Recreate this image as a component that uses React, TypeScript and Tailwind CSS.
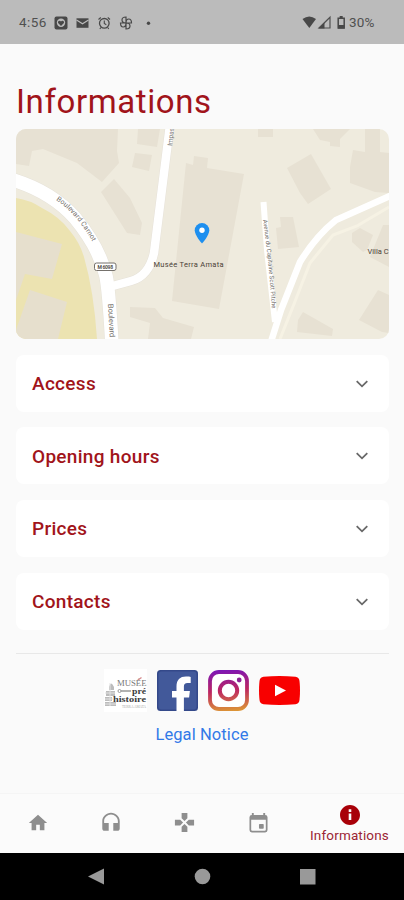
import React from "react";

const buildings = [
  "16,129 118,129 117,151 119,163 102,182 77,163 43,149 32,151 29,166 16,164",
  "114,179 101,192 127,233 140,235 142,223 130,198",
  "138,129 160,129 157,147 137,144",
  "135,153 152,155 149,171 132,167",
  "186,163 193,165 194,156 208,158 207,168 244,174 219,309 172,301",
  "130,307 155,308 163,318 194,327 191,339 148,339 150,323 130,317",
  "258,129 273,129 273,137 258,137",
  "313,129 350,129 340,139 340,147 330,146 330,142 320,140",
  "287,168 311,154 331,189 308,204 300,193",
  "365,129 380,129 380,152 389,153 389,193 375,192 350,183 350,167 353,150 365,152",
  "280,217 293,217 299,247 278,249 276,228 281,227",
  "352,233 360,228 373,235 367,250 363,252 352,242",
  "383,225 389,225 389,267 370,257",
  "378,290 389,295 389,333 382,332 359,320",
  "303,312 333,329 332,336 297,332 298,320",
];

function MapCard() {
  return (
    <svg viewBox="16 129 373 210" className="block h-[210px] w-[373px] rounded-[10px] font-['Roboto',sans-serif]">
      <rect x="16" y="129" width="373" height="210" fill="#efebde" />
      <g fill="#e7e1d3">
        {buildings.map((p) => (
          <polygon key={p} points={p} />
        ))}
      </g>
      <path d="M16 198Q30 200 42 208Q60 217 70 231Q80 243 84 257Q94 292 97 339H16Z" fill="#ece3b1" />
      <path d="M16 232L62 244L52 279L25 274L16 300ZM30 290L67 302L58 339H16V330Z" fill="#e6dfcd" />
      <path d="M280 339L294 304L310 263L333 235L357 226L389 207" fill="none" stroke="#f6f2e4" strokeWidth="3" />
      <g fill="none" stroke="#e6e2d9">
        <path d="M10 179Q51 191 75 218Q99 247 106 276Q109 290 112 345" strokeWidth="14.500" />
        <path d="M109 287L131 281Q149 276 154 253L170 125" strokeWidth="9.500" />
      </g>
      <g fill="none" stroke="#fff">
        <path d="M10 179Q51 191 75 218Q99 247 106 276Q109 290 112 345" strokeWidth="13.5" />
        <path d="M109 287L131 281Q149 276 154 253L170 125" strokeWidth="8.5" />
        <path d="M270 345L281 310L300 262Q316 236 336 220L392 195" strokeWidth="6.5" />
        <path d="M263.500 202L267 250L275 322" strokeWidth="6" />
      </g>
      <path id="carnot" d="M56 200Q79 215 97 250" fill="none" />
      <g fill="#74706b" fontSize="7">
        <text textLength="56">
          <textPath href="#carnot">Boulevard Carnot</textPath>
        </text>
        <text transform="translate(108 304) rotate(87)" fontSize="7.500">Boulevard</text>
        <text transform="translate(172 146) rotate(-84)" fontSize="6.500">Impasse</text>
        <path id="avenue" d="M263 220Q269 260 272 310" fill="none" />
        <text fontSize="6" textLength="89">
          <textPath href="#avenue">Avenue du Capitaine Scott Pitche</textPath>
        </text>
      </g>
      <rect x="94.500" y="263" width="21.500" height="7.500" rx="2" fill="#fff" stroke="#75716c" strokeWidth="1" />
      <text x="97.500" y="268.800" fontSize="5" fontWeight="700" fill="#55514c" textLength="15.500">M 6098</text>
      <path d="M202 223a7.300 7.300 0 0 0-7.300 7.300c0 5.400 7.300 13.200 7.300 13.200s7.300-7.800 7.300-13.200a7.300 7.300 0 0 0-7.300-7.300Z" fill="#1e8fef" />
      <circle cx="202" cy="230.200" r="2.700" fill="#fff" />
      <text x="153.500" y="266.700" fontSize="7.500" fill="#4b3f37" textLength="70">Musée Terra Amata</text>
      <text x="367.500" y="254" fontSize="7.500" fill="#4b3f37">Villa C</text>
    </svg>
  );
}

function StatusBar() {
  return (
    <div className="flex h-11 shrink-0 items-center bg-[#bbb] pt-px pl-[19px] text-[13.500px] text-[#505050]">
      <span className="w-[28px] tracking-[0.4px]">4:56</span>
      <svg viewBox="54 16 98 14" className="ml-[7px] h-[14px] w-[98px]" fill="none" stroke="#484848">
        <rect x="54.500" y="16.500" width="13" height="13" rx="2" fill="#484848" stroke="none" />
        <circle cx="61" cy="22.700" r="4.200" fill="#bbb" stroke="none" />
        <path d="M61 26l-2.700-2.800c-1.300-1.700 1.300-3.700 2.700-1.700 1.400-2 4 0 2.700 1.700Z" fill="#484848" stroke="none" />
        <path d="M76.500 18.300h12v9.500h-12z" fill="#484848" stroke="none" />
        <path d="M76.500 20l6 3.800 6-3.800" stroke="#bbb" strokeWidth="1.200" />
        <circle cx="104.300" cy="23.300" r="4.800" strokeWidth="1.300" />
        <path d="M104.300 20.500v3l2 1.200M98.500 19.500l2.300-2M110 19.500l-2.300-2M101 27.500l-1.200 1.500M107.600 27.500l1.200 1.500" strokeWidth="1.100" />
        <path d="M126 23V17q-4 0-4 3t4 3M126 23h5.500q0-4-2.700-4T126 23M126 23v6q4 0 4-3T126 23M126 23h-5.500q0 4 2.700 4T126 23" strokeWidth="1.200" />
        <circle cx="148.500" cy="23.300" r="1.700" fill="#484848" stroke="none" />
      </svg>
      <svg viewBox="302 15 45 15" className="ml-[150px] h-[15px] w-[45px]" fill="#484848">
        <path d="M302.500 19Q309.300 13.800 316 19L309.300 28Z" />
        <path d="M319 28L330 17.200V28Z" fill="none" stroke="#505050" strokeWidth="1.200" />
        <path d="M318.500 28.500L324.500 22.500V28.500Z" />
        <path d="M338.200 18.200h6v9.700h-6z" fill="none" stroke="#484848" strokeWidth="1.500" />
        <path d="M339.700 16h3v2h-3zM338 25h6.500v3.500H338z" />
      </svg>
      <span className="ml-[2px] tracking-[0.200px]">30%</span>
    </div>
  );
}

function AccordionRow({ label }: { label: string }) {
  return (
    <button className="flex h-[57px] w-[373px] items-center justify-between rounded-lg bg-white pt-px pr-[20px] pl-4 text-[19px] font-medium text-[#a1141a]">
      <span className="pt-px tracking-[0.300px]">{label}</span>
      <svg viewBox="0 0 14 8" className="h-2 w-[14px]" fill="none" stroke="#686868" strokeWidth="1.800">
        <path d="M1.700 1.200L7 6.300L12.300 1.200" />
      </svg>
    </button>
  );
}

function MuseumLogo() {
  return (
    <svg viewBox="0 0 43 43" className="h-[43px] w-[43px] font-['Liberation_Serif',serif]">
      <rect width="43" height="43" fill="#fff" />
      <g fill="#bcbcbc">
        <path d="M5 18Q7 11 10 18V21H5ZM2 22h9v5H2ZM1 28h7v4H1ZM1 33h11v4H1Z" />
      </g>
      <path d="M1 24h10M1 30h8M1 35h11M6 14v23" stroke="#e3e3e3" strokeWidth="1" />
      <text x="13" y="17" fontSize="8" fill="#777" textLength="29.500" lengthAdjust="spacingAndGlyphs">MUSÉE</text>
      <path d="M34 11l3.500-2.500" stroke="#d4878a" strokeWidth="1.200" />
      <path d="M17 22h10" stroke="#888" strokeWidth="1.300" />
      <circle cx="15.500" cy="22" r="1.500" fill="none" stroke="#999" />
      <text x="28" y="24.500" fontSize="8" fontWeight="700" fill="#3b3b3b" textLength="14" lengthAdjust="spacingAndGlyphs">pré</text>
      <text x="9" y="33" fontSize="8" fontWeight="700" fill="#3b3b3b" textLength="33" lengthAdjust="spacingAndGlyphs">histoire</text>
      <text x="18" y="38.500" fontSize="3.500" fill="#aaa" textLength="24">TERRA AMATA</text>
    </svg>
  );
}

function Socials() {
  return (
    <div className="flex h-[43px] items-center pl-[88px]">
      <MuseumLogo />
      <svg viewBox="0 0 41 41" className="ml-[9.500px] h-[41px] w-[41px]">
        <rect width="41" height="41" rx="3.500" fill="#34498a" />
        <rect x="1.500" y="1.500" width="38" height="38" rx="3" fill="#42599a" />
        <path d="M19.500 41V27.500h-4.500V21h4.500V16.500c0-6.700 3.500-10 9.500-10 2.300 0 4 .2 4.700.4v6h-3.200c-2.600 0-3.600 1.300-3.600 3.600V21h6l-.8 6.500h-5.200V41Z" fill="#fff" />
      </svg>
      <svg viewBox="0 0 41 41" className="ml-[10px] h-[41px] w-[41px]" fill="none" stroke="url(#insta)">
        <defs>
          <linearGradient id="insta" gradientUnits="userSpaceOnUse" x1="18" y1="0" x2="22" y2="41">
            <stop offset="0" stopColor="#7d16b4" />
            <stop offset=".5" stopColor="#bd2661" />
            <stop offset="1" stopColor="#dc9436" />
          </linearGradient>
        </defs>
        <rect x="2" y="2" width="37" height="37" rx="9" fill="#fff" strokeWidth="3.800" />
        <circle cx="20.500" cy="20.500" r="8.700" strokeWidth="4" />
        <circle cx="31.200" cy="10" r="2.400" fill="#8b2196" stroke="none" />
      </svg>
      <svg viewBox="0 0 41 29" className="ml-[10px] h-[29px] w-[41px]">
        <path d="M4.500.8Q20.500-.6 36.500.8Q40 1.200 40.500 5Q41.500 14.500 40.500 24Q40 27.800 36.500 28.200Q20.500 29.600 4.500 28.200Q1 27.800.5 24Q-.5 14.500.5 5Q1 1.200 4.500.8Z" fill="#f80000" />
        <path d="M16 8.800V20.200L27 14.500Z" fill="#fff" />
      </svg>
    </div>
  );
}

function TabBar() {
  return (
    <nav className="flex h-[60px] shrink-0 items-center border-t border-[#f5f5f5] bg-[#fbfbfb] pb-[2px] pl-px text-[#8e8e8e]">
      <div className="flex w-[73px] justify-center">
        <svg viewBox="0 0 24 24" className="h-[22px] w-[22px]" fill="currentColor"><path d="M10 20v-6h4v6h5v-8h3L12 3 2 12h3v8z" /></svg>
      </div>
      <div className="flex w-[74px] justify-center">
        <svg viewBox="0 0 24 24" className="mb-[2px] h-[22px] w-[22px]" fill="currentColor"><path d="M12 2c-5 0-9.500 4-9.500 9v8c0 1.500 1 2.500 2.500 2.500h4.500V13H4.500v-2c0-3.900 3.600-7.200 7.500-7.200s7.500 3.300 7.500 7.200v2h-5v8.500H19c1.500 0 2.500-1 2.500-2.500v-8c0-5-4.500-9-9.500-9z" /></svg>
      </div>
      <div className="flex w-[73px] justify-center">
        <svg viewBox="0 0 24 24" className="h-[23px] w-[23px]" fill="currentColor"><path d="M15 7.500V2H9v5.500l3 3zM7.500 9H2v6h5.500l3-3zM9 16.500V22h6v-5.500l-3-3zM16.500 9l-3 3 3 3H22V9z" /></svg>
      </div>
      <div className="flex w-[74px] justify-center">
        <svg viewBox="0 0 20 22" className="mb-px h-[21px] w-[19px]" fill="currentColor">
          <path d="M3 1h2v2h10V1h2v2q2.500 0 2.500 2.500V19q0 2.500-2.500 2.500H3Q.5 21.500.5 19V5.500Q.5 3 3 3ZM2.300 8V18.500q0 1.200 1.200 1.200h13q1.200 0 1.200-1.200V8Z" fillRule="evenodd" />
          <rect x="10.500" y="12.500" width="5" height="5" rx=".8" />
        </svg>
      </div>
      <div className="flex w-[109px] flex-col items-center text-[#9b2635]">
        <svg viewBox="0 0 24 24" className="h-[24px] w-[24px]" fill="#a80008"><path d="M12 2C6.480 2 2 6.480 2 12s4.480 10 10 10 10-4.480 10-10S17.520 2 12 2zm1.300 15h-2.600v-6.500h2.600V17zm0-8.100h-2.600V6.300h2.600v2.600z" /></svg>
        <span className="mt-px text-[13.500px] leading-[15px] tracking-[0.150px]">Informations</span>
      </div>
    </nav>
  );
}

export default function App() {
  return (
    <div className="flex h-[900px] w-[404px] flex-col overflow-hidden bg-[#fafafa] font-['Roboto',sans-serif]">
      <StatusBar />
      <main className="flex flex-1 flex-col px-4">
        <h1 className="mt-[37px] h-12 text-[33px] leading-[41px] tracking-[0.600px] text-[#a1141a]">Informations</h1>
        <MapCard />
        <div className="mt-[15.500px] flex flex-col gap-[15.800px]">
          <AccordionRow label="Access" />
          <AccordionRow label="Opening hours" />
          <AccordionRow label="Prices" />
          <AccordionRow label="Contacts" />
        </div>
        <div className="mt-[23px] mb-[15px] h-px w-[373px] shrink-0 bg-[#e8e8e8]" />
        <Socials />
        <a className="mt-[11px] text-center text-[16.500px] leading-6 tracking-[0.100px] text-[#3179e8]">Legal Notice</a>
      </main>
      <TabBar />
      <div className="flex h-[47px] shrink-0 items-center bg-black">
        <svg viewBox="0 0 404 47" className="h-[47px] w-[404px]" fill="#999">
          <path d="M88 23.500L104 15.500V31.500Z" />
          <circle cx="202.500" cy="23.500" r="7.800" />
          <rect x="300" y="16" width="15.500" height="15.500" />
        </svg>
      </div>
    </div>
  );
}
